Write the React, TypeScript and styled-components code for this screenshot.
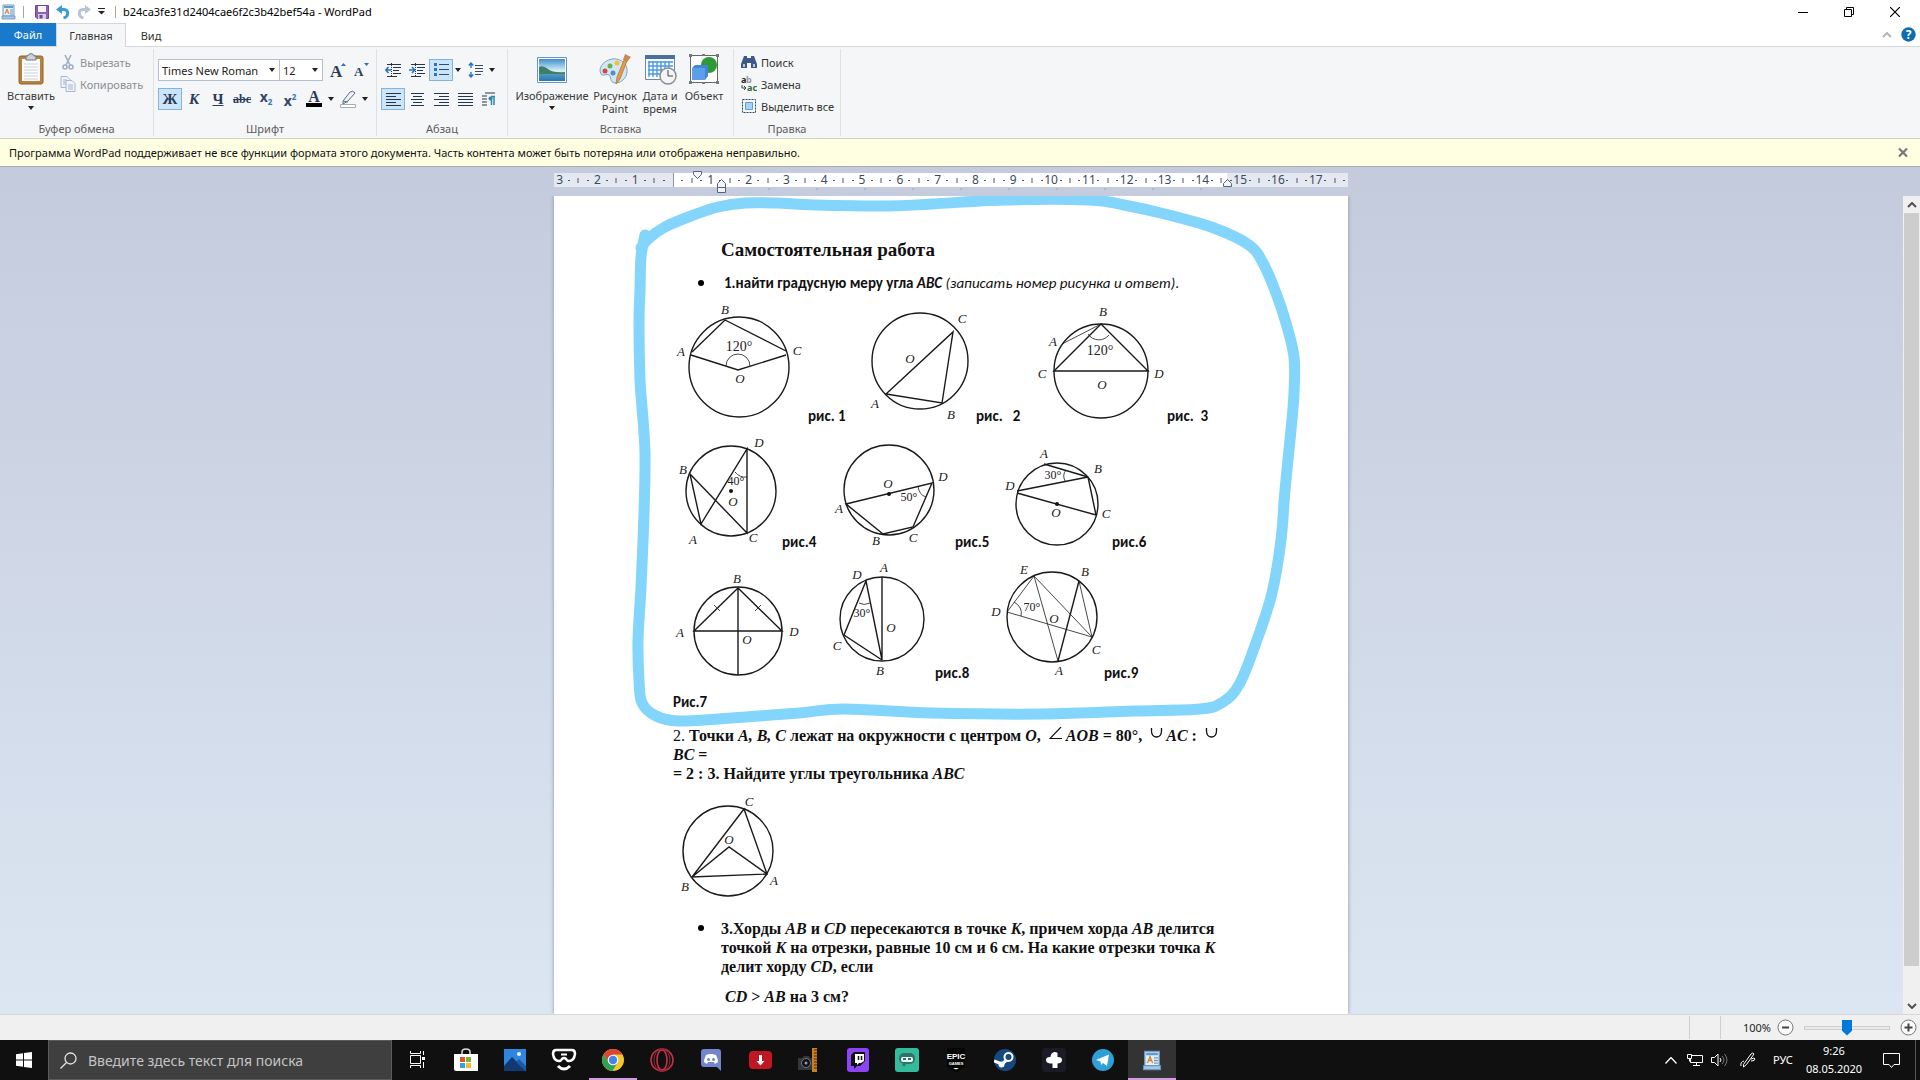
import React from "react";
import styled, { createGlobalStyle, css } from "styled-components";

const ui = `"Noto Sans", "Open Sans", sans-serif`;
const serif = `"Times New Roman", "Liberation Serif", serif`;
const calibri = `Calibri, "Noto Sans", sans-serif`;

const GlobalStyle = createGlobalStyle`
  * { box-sizing: border-box; }
  body { margin: 0; font-family: ${ui}; font-size: 11px; color: #1e1e1e; overflow: hidden; }
  button, select, input { font: inherit; color: inherit; margin: 0; }
  button { border: 0; background: none; padding: 0; }
  svg { display: block; flex: none; }
  p, h1, ul { margin: 0; padding: 0; }
`;

const Window = styled.div`
  display: flex;
  flex-direction: column;
  height: 100vh;
  background: #fff;
`;

/* ---------- title bar and tabs ---------- */
const TitleBar = styled.header`
  display: flex;
  align-items: center;
  height: 23px;
  padding-left: 1px;
`;
const QuickBar = styled.div`
  display: flex;
  align-items: center;
`;
const QuickButton = styled.button`
  display: grid;
  place-items: center;
  width: ${(p: { $w?: number }) => p.$w ?? 21}px;
  height: 18px;
`;
const Rule = styled.span`
  width: 1px;
  height: 12px;
  margin: 0 7px;
  background: #a6a6a6;
`;
const Title = styled.span`
  line-height: 16px;
  color: #000;
  white-space: nowrap;
`;
const WindowButtons = styled.div`
  display: flex;
  margin-left: auto;
  padding-right: 2px;
`;
const WindowButton = styled.button`
  display: grid;
  place-items: center;
  width: 46px;
  height: 20px;
`;
const TabRow = styled.nav`
  display: flex;
  height: 24px;
  border-bottom: 1px solid #d5d6d8;
`;
const FileTab = styled.button`
  width: 56px;
  height: 23px;
  background: #1979ca;
  color: #fff;
`;
const Tab = styled.button<{ $active?: boolean }>`
  width: ${(p) => (p.$active ? 70 : 50)}px;
  height: 24px;
  color: #333;
  ${(p) =>
    p.$active &&
    css`
      background: #f5f6f7;
      border: 1px solid #d5d6d8;
      border-bottom: 0;
    `}
`;
const TabTools = styled.div`
  display: flex;
  align-items: center;
  gap: 9px;
  margin-left: auto;
  padding-right: 4px;
`;

/* ---------- ribbon ---------- */
const Ribbon = styled.section`
  display: flex;
  height: 92px;
  padding: 2px 0;
  background: #f5f6f7;
  border-bottom: 1px solid #d0d2c8;
`;
const Group = styled.div<{ $w: number }>`
  display: flex;
  flex-direction: column;
  width: ${(p) => p.$w}px;
  border-right: 1px solid #dfe1e4;
`;
const GroupBody = styled.div<{ $left: number }>`
  display: flex;
  flex: 1;
  padding: 2px 0 0 ${(p) => p.$left}px;
`;
const GroupRows = styled.div`
  display: flex;
  flex-direction: column;
  gap: 7px;
  padding-top: 8px;
`;
const Row = styled.div`
  display: flex;
`;
const GroupName = styled.div`
  height: 16px;
  line-height: 18px;
  text-align: center;
  color: #5c5c5c;
`;
const BigButton = styled.button<{ $w: number }>`
  display: flex;
  flex-direction: column;
  align-items: center;
  gap: 4px;
  width: ${(p) => p.$w}px;
  padding-top: 2px;
  line-height: 13px;
  color: #3a3a3a;
`;
const SmallStack = styled.div`
  display: flex;
  flex-direction: column;
`;
const SmallButton = styled.button<{ $dim?: boolean }>`
  display: flex;
  align-items: center;
  gap: 4px;
  height: 22px;
  padding-left: 2px;
  color: ${(p) => (p.$dim ? "#8f8f8f" : "#333")};
  white-space: nowrap;
`;
const ToolButton = styled.button<{ $on?: boolean; $narrow?: boolean }>`
  display: grid;
  place-items: center;
  width: ${(p) => (p.$narrow ? 10 : 24)}px;
  height: 22px;
  color: #2b3c59;
  ${(p) =>
    p.$on &&
    css`
      background: #cce4fa;
      border: 1px solid #82b4e0;
    `}
`;
const Glyph = styled.span<{ $look?: "bold" | "italic" | "under" | "strike" }>`
  font-family: ${serif};
  font-size: ${(p) => (p.$look === "strike" ? 12 : 15)}px;
  line-height: 16px;
  font-weight: bold;
  font-style: ${(p) => (p.$look === "italic" ? "italic" : "normal")};
  text-decoration: ${(p) =>
    p.$look === "under" ? "underline" : p.$look === "strike" ? "line-through" : "none"};
`;
const Index = styled.span<{ $up?: boolean }>`
  font-weight: bold;
  font-size: 14px;
  line-height: 16px;
  color: #33476b;
  & > span {
    font-size: 8px;
    vertical-align: ${(p) => (p.$up ? "6px" : "-3px")};
    color: #2f78b8;
  }
`;
const Combo = styled.label<{ $w: number }>`
  display: grid;
  width: ${(p) => p.$w}px;
  height: 22px;
  align-items: center;
  border: 1px solid #b6bfcf;
  background: #fff;
  & + & { margin-left: -1px; }
  & > * { grid-area: 1 / 1; }
  & > svg { justify-self: end; margin-right: 4px; pointer-events: none; }
`;
const ComboSelect = styled.select`
  appearance: none;
  width: 100%;
  height: 20px;
  padding: 0 0 0 3px;
  border: 0;
  background: transparent;
  color: #222;
`;
const Spacer = styled.span<{ $w: number }>`
  width: ${(p) => p.$w}px;
`;

/* ---------- notice ---------- */
const Notice = styled.div`
  display: flex;
  align-items: center;
  justify-content: space-between;
  height: 28px;
  padding: 0 12px 0 9px;
  background: #ffffe1;
  border-bottom: 1px solid #a9aeac;
  color: #111;
`;

/* ---------- workspace ---------- */
const Workspace = styled.main`
  display: flex;
  flex-direction: column;
  flex: 1;
  min-height: 0;
  background: linear-gradient(#c4cbdd, #dce6f2);
`;
const RulerRow = styled.div`
  display: flex;
  justify-content: center;
  height: 29px;
  padding-right: 18px;
`;
const Body = styled.div`
  display: flex;
  flex: 1;
  min-height: 0;
`;
const Canvas = styled.div`
  display: flex;
  justify-content: center;
  flex: 1;
  padding-right: 1px;
  overflow: hidden;
`;
const Page = styled.article`
  position: relative;
  width: 794px;
  padding: 40px 110px 0 119px;
  background: #fff;
  box-shadow: 0 0 4px #8a93a8;
  font-family: ${serif};
  font-weight: bold;
  font-size: 16px;
  line-height: 19px;
  color: #111;
`;
const Scribble = styled.svg`
  position: absolute;
  left: 0;
  top: 0;
  pointer-events: none;
`;
const Heading = styled.h1`
  margin-left: 48px;
  font-size: 19px;
  line-height: 28px;
`;
const TaskList = styled.ul`
  padding-left: 48px;
  list-style: none;
`;
const Task = styled.li<{ $sans?: boolean }>`
  display: flex;
  margin-left: -24px;
  gap: ${(p) => (p.$sans ? 20 : 17)}px;
  ${(p) =>
    p.$sans &&
    css`
      margin: 10px 0 7px -24px;
      font-family: ${calibri};
      font-size: 15px;
      white-space: nowrap;
    `}
  &::before {
    content: "";
    flex: none;
    width: 6px;
    height: 6px;
    margin: 6px 0 0 1px;
    border-radius: 50%;
    background: #000;
  }
`;
const Light = styled.span`
  font-weight: normal;
`;
const FigureRow = styled.div`
  display: flex;
`;
const Figure = styled.figure<{ $w: number }>`
  display: flex;
  align-items: flex-end;
  width: ${(p) => p.$w}px;
  margin: 0;
`;
const Caption = styled.figcaption`
  font-family: ${calibri};
  font-size: 15px;
  line-height: 19px;
  white-space: pre;
`;
const LooseCaption = styled.p`
  margin: 10px 0 14px;
  font-family: ${calibri};
  font-size: 15px;
`;
const Drawing = styled.svg`
  overflow: visible;
  fill: none;
  stroke: #1a1a1a;
  stroke-width: 1.4;
  & text {
    fill: #222;
    stroke: none;
    font-family: ${serif};
    font-size: 13px;
    font-weight: normal;
    font-style: italic;
    text-anchor: middle;
  }
  & .angle { font-style: normal; font-size: 14px; }
  & .small { font-style: normal; font-size: 12px; }
  & .thin { stroke-width: 0.8; }
  & .dot { fill: #111; stroke: none; }
`;
const Symbol = styled.svg`
  display: inline-block;
  vertical-align: 1px;
  margin: 0 3px 0 4px;
`;
const Problem = styled.p`
  margin-bottom: 5px;
`;
const LastProblem = styled.section`
  margin-top: 5px;
`;
const LastLine = styled.p`
  margin: 11px 0 0 52px;
`;
const Scrollbar = styled.div`
  display: flex;
  flex-direction: column;
  width: 17px;
  padding: 0 1px;
  background: #f0f0f0;
`;
const ScrollButton = styled.button`
  display: grid;
  place-items: center;
  height: 17px;
`;
const ScrollTrack = styled.div`
  flex: 1;
  padding-bottom: 31px;
`;
const ScrollThumb = styled.div`
  height: 100%;
  background: #cdcdcd;
`;

/* ---------- status bar ---------- */
const StatusBar = styled.footer`
  display: flex;
  align-items: center;
  justify-content: flex-end;
  height: 26px;
  padding-right: 3px;
  background: #f0f0f0;
  border-top: 1px solid #d7d7d7;
`;
const StatusCell = styled.span<{ $w: number }>`
  width: ${(p) => p.$w}px;
  height: 23px;
  line-height: 23px;
  border-left: 1px solid #d0d0d0;
  text-align: right;
`;
const ZoomButton = styled.button`
  display: grid;
  place-items: center;
  margin: 0 6px;
  &:last-child { margin-right: 0; }
`;
const ZoomSlider = styled.input`
  appearance: none;
  width: 94px;
  height: 18px;
  background: transparent;
  padding: 0 4px;
  &::-webkit-slider-runnable-track {
    height: 4px;
    background: #e7eaea;
    border: 1px solid #cfcfcf;
  }
  &::-webkit-slider-thumb {
    appearance: none;
    width: 10px;
    height: 16px;
    margin-top: -7px;
    background: #0078d7;
    clip-path: polygon(0 0, 100% 0, 100% 70%, 50% 100%, 0 70%);
  }
`;

/* ---------- taskbar ---------- */
const Taskbar = styled.nav`
  display: flex;
  height: 40px;
  background: #101010;
  color: #fff;
`;
const StartButton = styled.button`
  display: grid;
  place-items: center;
  width: 48px;
`;
const SearchBox = styled.label`
  display: flex;
  align-items: center;
  gap: 11px;
  width: 344px;
  padding-left: 11px;
  background: #3f3f3f;
  border: 1px solid #5b5b5b;
`;
const SearchInput = styled.input`
  flex: 1;
  min-width: 0;
  border: 0;
  padding: 0;
  background: transparent;
  font-size: 14px;
  &::placeholder { color: #c4c4c4; opacity: 1; }
`;
const Apps = styled.div`
  display: flex;
  gap: 1px;
  padding-left: 1px;
`;
const AppButton = styled.button<{ $state?: "running" | "active" }>`
  display: grid;
  place-items: center;
  width: 48px;
  height: 40px;
  padding-top: 2px;
  border-bottom: 2px solid ${(p) => (p.$state ? "#d39ae0" : "transparent")};
  background: ${(p) => (p.$state === "active" ? "#333" : "none")};
`;
const Tray = styled.div`
  display: flex;
  align-items: center;
  margin-left: auto;
  padding-right: 4px;
`;
const TrayButton = styled.button<{ $w: number }>`
  display: grid;
  place-items: center;
  width: ${(p) => p.$w}px;
  height: 40px;
  line-height: 18px;
`;
const ShowDesktop = styled.span`
  width: 1px;
  height: 40px;
  background: #555;
`;

/* ---------- small icons ---------- */
const Arrow = () => (
  <svg width="6" height="4"><path d="M0 0h6L3 4z" fill="#222" /></svg>
);

const WordPadIcon = ({ s = 15 }: { s?: number }) => (
  <svg width={s} height={s + 1} viewBox="0 0 15 16">
    <path d="M2 1h11v11H2z" fill="#e3f0fb" stroke="#6f9cc6" />
    <path d="M1 12h13v3H1z" fill="#a5c8e6" stroke="#6a93ba" strokeWidth=".8" />
    <path d="M3 2h9v2H3z" fill="#5f9ad0" />
    <path d="M4 10l2-5 2 5M5 8h2" stroke="#d6842c" fill="none" />
    <path d="M9 6h3M9 8h3M9 10h3" stroke="#6f9cc6" />
  </svg>
);
const SaveIcon = () => (
  <svg width="14" height="14" viewBox="0 0 14 14">
    <path d="M.5.5h13v13H2L.5 12z" fill="#8b62b0" stroke="#6f4796" />
    <path d="M3 1h8v6H3z" fill="#f5f2f8" /><path d="M3 9h8v5H3z" fill="#d8cde4" />
    <path d="M4.500 10h3v3.500h-3z" fill="#6f4796" />
  </svg>
);
const UndoIcon = () => (
  <svg width="14" height="14" viewBox="0 0 14 14">
    <path d="M6 0L0 4.500 6 9z" fill="#3a9bd4" />
    <path d="M4 4.500h4c5 0 5 7-.5 8.500" fill="none" stroke="#3a9bd4" strokeWidth="3" />
  </svg>
);
const RedoIcon = () => (
  <svg width="14" height="14" viewBox="0 0 14 14">
    <path d="M8 0l6 4.500L8 9z" fill="#bac3d2" />
    <path d="M10 4.500H6c-5 0-5 7 .5 8.500" fill="none" stroke="#bac3d2" strokeWidth="3" />
  </svg>
);
const ClipboardIcon = () => (
  <svg width="26" height="32" viewBox="0 0 26 32">
    <rect x="1" y="3" width="24" height="28" rx="2" fill="#b9813f" stroke="#93622a" />
    <path d="M4 6h18v22H4z" fill="#fcfcfc" />
    <path d="M6 11h14M6 14h14M6 17h14M6 20h14M6 23h14M6 26h14" stroke="#cbd3dc" />
    <path d="M8 3h2c0-3 6-3 6 0h2v4H8z" fill="#cdd3da" stroke="#6e7883" />
  </svg>
);
const ScissorsIcon = () => (
  <svg width="16" height="16" viewBox="0 0 16 16" fill="none" stroke="#a0adc4" strokeWidth="1.600">
    <path d="M5 1l5 10M11 1L6 11" /><circle cx="5" cy="13" r="2" /><circle cx="11" cy="13" r="2" />
  </svg>
);
const CopyIcon = () => (
  <svg width="16" height="16" viewBox="0 0 16 16" fill="#f1f4f9" stroke="#a9b6cc">
    <path d="M1 .5h6l3 3v8H1z" /><path d="M6 4.500h6l3 3v8H6z" /><path d="M3 4h4M3 6h3M3 8h3M8 9h5M8 11h5M8 13h5" />
  </svg>
);
const SizeIcon = ({ up }: { up?: boolean }) => (
  <svg width="16" height="16" viewBox="0 0 16 16">
    <text x="0" y={up ? 15 : 14} fontFamily="Liberation Serif" fontWeight="bold" fontSize={up ? 17 : 13} fill="#2b3c59">A</text>
    <path d={up ? "M11 4h5l-2.500-3z" : "M10 1h5l-2.500 3z"} fill="#2f6fb5" />
  </svg>
);
const FontColorIcon = () => (
  <svg width="16" height="18" viewBox="0 0 16 18">
    <text x="8" y="12" textAnchor="middle" fontFamily="Liberation Serif" fontWeight="bold" fontSize="16" fill="#2b3c59">A</text>
    <path d="M0 13h16v4H0z" fill="#000" />
  </svg>
);
const HighlightIcon = () => (
  <svg width="16" height="18" viewBox="0 0 16 18">
    <path d="M3 11l7-9q3-2 5 1l-7 8-5 3z" fill="#eef1f5" stroke="#5d6f8a" /><path d="M3 11l5 1" stroke="#5d6f8a" />
    <path d="M.5 14.500h15v3H.5z" fill="#fff" stroke="#a7adb7" />
  </svg>
);
const IndentIcon = ({ out }: { out?: boolean }) => (
  <svg width="16" height="14" viewBox="0 0 16 14" fill="none">
    <path d="M2 1.500h14M8 4.500h8M8 7.500h6M8 10.500h8M2 13.500h10" stroke="#26344c" />
    <path d="M6.500 0v14" stroke="#26344c" strokeDasharray="1 1" />
    <path d={out ? "M6 7H1M3.500 4L.8 7l2.700 3" : "M0 7h5M3 4l2.700 3L3 10"} stroke="#2775c4" strokeWidth="1.600" />
  </svg>
);
const BulletsIcon = () => (
  <svg width="15" height="14" viewBox="0 0 15 14">
    <path d="M5 1.500h10M5 6.500h10M5 11.500h10" stroke="#3a4a66" />
    <path d="M0 0h3v3H0zM0 5h3v3H0zM0 10h3v3H0z" fill="#2775c4" />
  </svg>
);
const SpacingIcon = () => (
  <svg width="15" height="16" viewBox="0 0 15 16" fill="none">
    <path d="M7 3.500h8M7 6.500h8M7 9.500h8M7 12.500h6" stroke="#3a4a66" />
    <path d="M3 1v5M3 10v5M.8 3.500L3 1l2.200 2.500M.8 12.500L3 15l2.200-2.500" stroke="#2775c4" strokeWidth="1.400" />
  </svg>
);
const AlignIcon = ({ d }: { d: string }) => (
  <svg width="15" height="13" viewBox="0 0 15 13"><path d={d} stroke="#26344c" /></svg>
);
const PilcrowIcon = () => (
  <svg width="14" height="14" viewBox="0 0 14 14" fill="none">
    <path d="M3 1h10M0 4h5M0 7h5M0 10h5M0 13h5" stroke="#26344c" />
    <path d="M13 4.500H9M9.500 4.500V13M12 4.500V13" stroke="#2e86b5" strokeWidth="1.500" /><circle cx="8.500" cy="6.500" r="2" fill="#2e86b5" />
  </svg>
);
const PictureIcon = () => (
  <svg width="32" height="32" viewBox="0 0 32 32">
    <defs><linearGradient id="sky" x2="0" y2="1"><stop stopColor="#3f8fd0" /><stop offset=".55" stopColor="#d9f2f4" /><stop offset="1" stopColor="#2c86c0" /></linearGradient></defs>
    <path d="M1.500 4.500h29v25h-29z" fill="#fff" stroke="#6e94b5" /><path d="M3 6h26v22H3z" fill="url(#sky)" />
    <path d="M3 14q4-2 9 2t17 3v2H3z" fill="#3c7f6a" /><path d="M3 21h26v7H3z" fill="#1f6fa8" opacity=".6" />
  </svg>
);
const PaintIcon = () => (
  <svg width="34" height="32" viewBox="0 0 34 32">
    <path d="M14 6C4 8 0 16 3 21c3 3 5-1 8 1s0 7 6 8c8 0 13-7 12-14S21 5 14 6z" fill="#d3e6f3" stroke="#7ea3bf" />
    <circle cx="7" cy="18" r="2.500" fill="#d0493e" /><circle cx="12" cy="13" r="2.500" fill="#6bb04a" />
    <circle cx="19" cy="10" r="2.500" fill="#f0c23c" /><circle cx="15" cy="20" r="2.500" fill="#4d8fd0" />
    <path d="M18 31l1-7 7-17 3 1-7 18z" fill="#e39a4c" stroke="#b06f2c" strokeWidth=".7" />
    <path d="M25 7l2-6 6 3-4 5z" fill="#c98a58" />
  </svg>
);
const DateIcon = () => (
  <svg width="34" height="32" viewBox="0 0 34 32">
    <path d="M2.500 2.500h29v24h-29z" fill="#f7fafd" stroke="#7089a8" /><path d="M2 2h30v4H2z" fill="#4a6fa0" />
    <path d="M5 9h25M5 13h25M5 17h25M5 21h25M6 8v16M10 8v16M14 8v16M18 8v16M22 8v16M26 8v16" stroke="#4f9bdc" strokeWidth="1.400" />
    <circle cx="25" cy="23" r="8" fill="#f4f4f4" stroke="#8a8f95" strokeWidth="1.500" /><path d="M25 17v6h5" stroke="#444" fill="none" />
  </svg>
);
const ObjectIcon = () => (
  <svg width="32" height="32" viewBox="0 0 32 32">
    <path d="M2.500 2.500h27v27h-27z" fill="#fff" stroke="#666" />
    <path d="M1 1h3v3H1zM28 1h3v3h-3zM1 28h3v3H1zM28 28h3v3h-3zM14 1h3v2h-3zM14 29h3v2h-3z" fill="#777" />
    <circle cx="21" cy="12" r="8" fill="#2f9a35" /><path d="M4 15l3-3h13v11l-3 4H4z" fill="#3f86d8" /><path d="M4 15h13v12H4z" fill="#5c9fe8" />
  </svg>
);
const FindIcon = () => (
  <svg width="16" height="14" viewBox="0 0 16 14">
    <path d="M3 1h3v2h4V1h3l3 8v4h-6V8H6v5H0V9z" fill="#3c5a85" /><path d="M2 9h2v3H2zM12 9h2v3h-2z" fill="#b7c9e0" />
  </svg>
);
const ReplaceIcon = () => (
  <svg width="16" height="16" viewBox="0 0 16 16" fontFamily="Noto Sans" fontWeight="bold" fontSize="9">
    <text x="0" y="7" fill="#222">a</text><text x="5" y="7" fill="#999">b</text>
    <text x="6" y="15" fill="#2a6a3a">ac</text><path d="M1 9v3h4M3 10l2 2-2 2" fill="none" stroke="#345" />
  </svg>
);
const SelectAllIcon = () => (
  <svg width="16" height="16" viewBox="0 0 16 16">
    <path d="M1.500 1.500h13v13h-13z" fill="none" stroke="#22476e" strokeDasharray="2 1" /><path d="M4.500 4.500h7v7h-7z" fill="#a9d3f5" stroke="#5f9fd0" />
  </svg>
);

/* ---------- ruler ---------- */
const ZERO = 119;
const cm = (n: number) => ZERO + (n * 794) / 21;
const Ruler = () => {
  const marks = [];
  for (let q = -12; q <= 71; q++) {
    const x = cm(q / 4);
    if (q % 4 === 0) {
      if (q !== 0) marks.push(<text key={q} x={x} y="17" textAnchor="middle">{Math.abs(q / 4)}</text>);
    } else if (q % 2 === 0) {
      marks.push(<path key={q} d={`M${Math.round(x)} 11v5`} stroke="#4a5568" />);
    } else {
      marks.push(<rect key={q} x={Math.round(x) - 1} y="13" width="2" height="1" fill="#4a5568" />);
    }
  }
  const stops = Array.from({ length: 10 }, (_, i) => 215 + i * 48);
  return (
    <svg width="794" height="29" fontSize="12" fill="#3d4a60">
      <rect y="6" width="794" height="14" fill="#e4e8f1" />
      <rect x={ZERO} y="6" width="554" height="14" fill="#fff" />
      <path d={`M${ZERO + 0.5} 6v14`} stroke="#8c97ad" />
      {marks}
      {stops.map((x) => <path key={x} d={`M${x} 21v2`} stroke="#9aa4b8" />)}
      <g fill="#f3f5f9" stroke="#56657e">
        <path d="M139.500 4.500h8v3l-4 4-4-4z" />
        <path d="M163.500 20.500v-4l4-4 4 4v4zM163.500 20.500h8v5h-8z" />
        <path d="M669.500 19.500v-3l4-4 4 4v3z" />
      </g>
    </svg>
  );
};

/* ---------- geometry figures ---------- */
type Label = [string, number, number, string?];
type Fig = {
  box: [number, number, number, number];
  c: [number, number, number];
  d: string;
  thin?: string;
  dot?: [number, number];
  labels: Label[];
  caption?: string;
  w: number;
};

const rows: Fig[][] = [
  [
    {
      box: [673, 300, 135, 126], w: 172, caption: "рис. 1", c: [739, 367, 50],
      d: "M691 355L738 370 786 355M692 352L725 320 786 351", thin: "M726 366A12 12 0 0 1 750 366",
      labels: [["B", 725, 310], ["A", 681, 352], ["C", 797, 351], ["120°", 739, 347, "angle"], ["O", 740, 379]],
    },
    {
      box: [845, 300, 131, 126], w: 177, caption: "рис.   2", c: [920, 361, 48],
      d: "M886 394L953 332 942 403z",
      labels: [["C", 962, 319], ["O", 910, 359], ["A", 875, 404], ["B", 951, 415]],
    },
    {
      box: [1022, 300, 145, 126], w: 190, caption: "рис.  3", c: [1101, 371, 47],
      d: "M1054 371L1101 324 1148 371z", thin: "M1062 344L1101 324M1088 334A13 13 0 0 0 1109 335",
      labels: [["B", 1103, 312], ["A", 1053, 342], ["120°", 1100, 351, "angle"], ["C", 1042, 374], ["D", 1159, 374], ["O", 1102, 385]],
    },
  ],
  [
    {
      box: [673, 426, 109, 126], w: 153, caption: "рис.4", c: [731, 491, 45],
      d: "M701 524L690 474 747 533V449z", thin: "M735 472Q740 478 747 477", dot: [731, 491],
      labels: [["D", 759, 443], ["B", 683, 470], ["40°", 736, 481, "small"], ["O", 733, 502], ["A", 693, 540], ["C", 753, 538]],
    },
    {
      box: [826, 426, 129, 126], w: 171, caption: "рис.5", c: [889, 490, 45],
      d: "M846 504L932 483 913 527 883 534z", thin: "M918 486Q919 495 926 497", dot: [889, 494],
      labels: [["O", 888, 484], ["D", 943, 477], ["50°", 909, 497, "small"], ["A", 839, 509], ["B", 876, 541], ["C", 913, 538]],
    },
    {
      box: [997, 426, 115, 126], w: 150, caption: "рис.6", c: [1057, 504, 41],
      d: "M1044 464L1088 477 1017 491M1088 477L1096 515 1017 493", thin: "M1066 470Q1062 475 1065 481", dot: [1057, 504],
      labels: [["A", 1044, 454], ["B", 1098, 469], ["30°", 1053, 475, "small"], ["D", 1010, 486], ["O", 1056, 513], ["C", 1106, 514]],
    },
  ],
  [
    {
      box: [673, 552, 140, 131], w: 140, c: [738, 631, 44],
      d: "M694 631L738 588 782 631zM738 588V675", thin: "M714 605L720 611M761 605L755 611",
      labels: [["B", 737, 579], ["A", 680, 633], ["D", 794, 632], ["O", 747, 640]],
    },
    {
      box: [813, 552, 122, 131], w: 172, caption: "рис.8", c: [882, 619, 42],
      d: "M882 577V660L866 581 844 635 882 660", thin: "M859 603Q864 606 870 603",
      labels: [["D", 857, 575], ["A", 884, 568], ["30°", 862, 613, "small"], ["O", 891, 628], ["C", 837, 646], ["B", 880, 671]],
    },
    {
      box: [985, 552, 119, 131], w: 160, caption: "рис.9", c: [1052, 617, 45],
      d: "M1079 581L1058 661", thin: "M1007 612L1034 576 1058 661M1034 576L1092 637 1079 581M1092 637L1007 612M1014 602Q1023 607 1021 616",
      labels: [["E", 1024, 570], ["B", 1085, 572], ["D", 996, 612], ["70°", 1032, 607, "small"], ["O", 1054, 619], ["C", 1096, 650], ["A", 1059, 671]],
    },
  ],
];
const triangle: Fig = {
  box: [673, 788, 120, 126], w: 120, c: [728, 851, 45],
  d: "M744 809L692 877 767 874zM692 877L729 847 767 874",
  labels: [["C", 749, 802], ["O", 729, 840], ["B", 685, 887], ["A", 774, 881]],
};

const FigureView = ({ f }: { f: Fig }) => (
  <Figure $w={f.w}>
    <Drawing width={f.box[2]} height={f.box[3]} viewBox={f.box.join(" ")}>
      <circle cx={f.c[0]} cy={f.c[1]} r={f.c[2]} />
      <path d={f.d} />
      {f.thin && <path className="thin" d={f.thin} />}
      {f.dot && <circle className="dot" cx={f.dot[0]} cy={f.dot[1]} r="2" />}
      {f.labels.map(([t, x, y, k], i) => <text key={i} className={k} x={x} y={y + 4}>{t}</text>)}
    </Drawing>
    {f.caption && <Caption>{f.caption}</Caption>}
  </Figure>
);
const Arc = () => (
  <Symbol width="13" height="12" viewBox="0 0 13 12"><path d="M1.500 0v3c0 8 10 8 10 0V0" fill="none" stroke="#111" strokeWidth="1.300" /></Symbol>
);

/* ---------- taskbar icons ---------- */
const TaskViewIcon = () => (
  <svg width="17" height="18" viewBox="0 0 17 18" fill="none" stroke="#fff">
    <path d="M1.500 4.500h10v8h-10zM1.500 0v2.500h10V0M1.500 17v-2.500h10V17M14.500 0v4M14.500 11v6" /><path d="M13 6h3v3h-3z" fill="#fff" stroke="none" />
  </svg>
);
const apps: { name: string; state?: "running" | "active"; icon: React.ReactNode }[] = [
  { name: "Представление задач", icon: <TaskViewIcon /> },
  { name: "Microsoft Store", icon: (
    <svg width="24" height="24" viewBox="0 0 24 24"><path d="M8 7V4c0-4 8-4 8 0v3" fill="none" stroke="#ddd" strokeWidth="1.500" /><path d="M0 6h24v17H2q-2 0-2-2z" fill="#fff" /><path d="M6 9h5v5H6z" fill="#e25428" /><path d="M12 9h5v5h-5z" fill="#7fb42e" /><path d="M6 15h5v5H6z" fill="#2fa4e0" /><path d="M12 15h5v5h-5z" fill="#f5b82e" /></svg>) },
  { name: "Фотографии", icon: (
    <svg width="24" height="23" viewBox="0 0 24 23"><path d="M1 0h22v22H1z" fill="#2f86dd" /><path d="M1 17L9 8l14 14H1z" fill="#123a70" /><path d="M13 13l3-3 7 7v5z" fill="#1d5aa6" /><circle cx="16" cy="5" r="2" fill="#e8f3ff" /></svg>) },
  { name: "Маска", icon: (
    <svg width="26" height="24" viewBox="0 0 26 24" fill="none" stroke="#fff" strokeWidth="2.500"><path d="M5 2h16q3 0 3 4-1 7-6 7-2 0-3-2-2-2-4 0-1 2-3 2-5 0-6-7 0-4 3-4z" /><path d="M7 18q6 6 12 0" strokeWidth="3" /><path d="M10 6.500h6" strokeWidth="2" /></svg>) },
  { name: "Google Chrome", state: "running", icon: (
    <svg width="22" height="22" viewBox="0 0 22 22"><circle cx="11" cy="11" r="11" fill="#f4c72e" /><path d="M1.500 5.500A11 11 0 0 1 20.500 5.500H11L6.500 13.500z" fill="#dc4436" /><path d="M1.500 5.500A11 11 0 0 0 10.500 22l5-8.500H6.500z" fill="#31a052" /><circle cx="11" cy="11" r="5.300" fill="#fff" /><circle cx="11" cy="11" r="4.200" fill="#4583ee" /></svg>) },
  { name: "Opera GX", icon: (
    <svg width="24" height="24" viewBox="0 0 24 24" fill="none" stroke="#c3304a"><circle cx="12" cy="12" r="11" strokeWidth="1.600" /><ellipse cx="12" cy="12" rx="5" ry="10" strokeWidth="1.600" /><ellipse cx="12" cy="12" rx="8" ry="11" stroke="#8d2438" /></svg>) },
  { name: "Discord", icon: (
    <svg width="20" height="22" viewBox="0 0 20 22"><path d="M3 0h14q3 0 3 3v19l-4-4H3q-3 0-3-3V3q0-3 3-3z" fill="#7386cc" /><path d="M5 6q5-2 10 0 2 4 2 7l-3 2-1-2H7l-1 2-3-2q0-3 2-7z" fill="#fff" /><circle cx="7.500" cy="10.500" r="1.500" fill="#7386cc" /><circle cx="12.500" cy="10.500" r="1.500" fill="#7386cc" /></svg>) },
  { name: "Загрузчик", icon: (
    <svg width="23" height="18" viewBox="0 0 23 18"><rect width="23" height="18" rx="4" fill="#c01722" /><path d="M10 4h3v6h2.500l-4 4.500-4-4.500H10z" fill="#fff" /></svg>) },
  { name: "Камера", icon: (
    <svg width="22" height="24" viewBox="0 0 22 24"><path d="M14 0h5v24h-5z" fill="#c9801f" /><path d="M16 2h3M16 5h3M16 8h3M16 11h3M16 14h3M16 17h3M16 20h3" stroke="#422" /><path d="M0 10h4l2-2h5l1 2h2v12H0z" fill="#33363b" /><circle cx="8" cy="15" r="4.500" fill="#111" stroke="#777" /><circle cx="8" cy="15" r="1.500" fill="#8a9ac0" /></svg>) },
  { name: "Twitch", icon: (
    <svg width="22" height="24" viewBox="0 0 22 24"><rect width="22" height="24" rx="3" fill="#8c45f5" /><path d="M4 7l3-3h11v9l-5 5h-3l-3 3v-3H4z" fill="#111" /><path d="M8 6h9v7l-3 2h-2l-2 2v-2H8z" fill="#fff" /><path d="M11.500 8v4M14.500 8v4" stroke="#111" strokeWidth="1.500" /></svg>) },
  { name: "Streamlabs", icon: (
    <svg width="24" height="24" viewBox="0 0 24 24"><rect width="24" height="24" rx="3" fill="#32bc9b" /><rect x="4" y="5" width="16" height="11" rx="5" fill="#35716b" /><rect x="6" y="9" width="12" height="5" rx="2" fill="#e5fff8" /><path d="M8 11h3M13 11h3" stroke="#35716b" strokeWidth="2" /><path d="M7 16h4l-2 3z" fill="#35716b" /></svg>) },
  { name: "Epic Games", icon: (
    <svg width="20" height="24" viewBox="0 0 20 24" fill="#fff" textAnchor="middle" fontFamily="Liberation Sans" fontWeight="bold"><path d="M1 0h18v19l-9 5-9-5z" fill="#050505" /><text x="10" y="11" fontSize="8">EPIC</text><text x="10" y="17" fontSize="4">GAMES</text><path d="M7 20h6l-3 1.500z" /></svg>) },
  { name: "Steam", icon: (
    <svg width="22" height="22" viewBox="0 0 22 22"><circle cx="11" cy="11" r="11" fill="#16497f" /><path d="M0 12l8 3 6-5" stroke="#fff" strokeWidth="3" fill="none" /><circle cx="14.500" cy="8" r="4" fill="#16497f" stroke="#fff" strokeWidth="2" /><circle cx="7.500" cy="15.500" r="3" fill="#fff" /></svg>) },
  { name: "Плюс", icon: (
    <svg width="24" height="24" viewBox="0 0 24 24"><rect width="24" height="24" rx="3" fill="#1b1b28" /><path d="M8.500 8Q9 5 12 4q3 0 3.500 1V9H16q4 0 4 3t-4 3.500h-.5V20h-5v-4.500H8Q4 15 4 12t4-3h.5z" fill="#fff" /></svg>) },
  { name: "Telegram", icon: (
    <svg width="22" height="22" viewBox="0 0 22 22"><circle cx="11" cy="11" r="11" fill="#2f9fd8" /><path d="M4 11l13-5.500L15 17l-4-3-2 2-.5-3.500z" fill="#fff" /></svg>) },
  { name: "WordPad", state: "active", icon: <WordPadIcon s={20} /> },
];

const Chevron = ({ d, c, w = 2 }: { d: string; c: string; w?: number }) => (
  <svg width="10" height="6" viewBox="0 0 10 6"><path d={d} fill="none" stroke={c} strokeWidth={w} /></svg>
);

/* ---------- marker outline ---------- */
const strokePoints: [number, number][] = [
  [87, 52], [94, 43], [111, 31], [137, 20], [164, 11], [191, 7], [222, 7], [262, 9], [334, 10], [378, 8],
  [450, 4], [535, 4], [570, 9], [615, 19], [660, 32], [695, 49], [709, 67], [722, 97], [732, 127], [740, 161],
  [740, 197], [737, 234], [731, 294], [727, 344], [718, 397], [704, 441], [686, 487], [669, 506], [646, 513],
  [579, 515], [490, 518], [378, 517], [289, 513], [245, 517], [164, 523], [124, 525], [102, 520], [88, 507],
  [85, 484], [84, 444], [87, 391], [90, 317], [91, 257], [88, 211], [86, 184], [85, 127], [86, 94], [87, 61], [91, 39],
];
const smooth = (p: [number, number][]) =>
  p.slice(1).reduce((d, b, i) => {
    const a = p[i];
    const before = p[i - 1] ?? a;
    const after = p[i + 2] ?? b;
    return `${d}C${a[0] + (b[0] - before[0]) / 6} ${a[1] + (b[1] - before[1]) / 6} ${b[0] - (after[0] - a[0]) / 6} ${b[1] - (after[1] - a[1]) / 6} ${b[0]} ${b[1]}`;
  }, `M${p[0][0]} ${p[0][1]}`);

export default function App() {
  return (
    <Window>
      <GlobalStyle />
      <TitleBar>
        <QuickBar>
          <QuickButton $w={15} aria-label="WordPad"><WordPadIcon /></QuickButton>
          <Rule />
          <QuickButton aria-label="Сохранить"><SaveIcon /></QuickButton>
          <QuickButton aria-label="Отменить"><UndoIcon /></QuickButton>
          <QuickButton aria-label="Вернуть"><RedoIcon /></QuickButton>
          <QuickButton $w={14} aria-label="Настройка панели">
            <svg width="7" height="7"><path d="M0 .5h7" stroke="#222" /><path d="M0 3h7L3.500 6.500z" fill="#222" /></svg>
          </QuickButton>
          <Rule />
        </QuickBar>
        <Title>b24ca3fe31d2404cae6f2c3b42bef54a - WordPad</Title>
        <WindowButtons>
          <WindowButton aria-label="Свернуть"><svg width="10" height="10"><path d="M0 5.500h10" stroke="#000" /></svg></WindowButton>
          <WindowButton aria-label="Восстановить"><svg width="10" height="10" fill="none" stroke="#000"><path d="M.5 2.500h7v7h-7zM2.500 2.500v-2h7v7h-2" /></svg></WindowButton>
          <WindowButton aria-label="Закрыть"><svg width="10" height="10"><path d="M0 0l10 10M10 0L0 10" stroke="#000" strokeWidth="1.200" /></svg></WindowButton>
        </WindowButtons>
      </TitleBar>
      <TabRow>
        <FileTab>Файл</FileTab>
        <Tab $active>Главная</Tab>
        <Tab>Вид</Tab>
        <TabTools>
          <Chevron d="M1 5l4-4 4 4" c="#b5b5b5" />
          <svg width="15" height="15" viewBox="0 0 15 15"><circle cx="7.500" cy="7.500" r="7.200" fill="#0f6cb4" /><text x="7.500" y="12" textAnchor="middle" fill="#fff" fontSize="12" fontWeight="bold">?</text></svg>
        </TabTools>
      </TabRow>

      <Ribbon>
        <Group $w={154}>
          <GroupBody $left={4}>
            <BigButton $w={54}><ClipboardIcon />Вставить<Arrow /></BigButton>
            <SmallStack>
              <SmallButton $dim><ScissorsIcon />Вырезать</SmallButton>
              <SmallButton $dim><CopyIcon />Копировать</SmallButton>
            </SmallStack>
          </GroupBody>
          <GroupName>Буфер обмена</GroupName>
        </Group>
        <Group $w={223}>
          <GroupBody $left={4}>
            <GroupRows>
              <Row>
                <Combo $w={122}>
                  <ComboSelect aria-label="Семейство шрифтов"><option>Times New Roman</option></ComboSelect><Arrow />
                </Combo>
                <Combo $w={44}>
                  <ComboSelect aria-label="Размер шрифта"><option>12</option></ComboSelect><Arrow />
                </Combo>
                <Spacer $w={3} />
                <ToolButton aria-label="Увеличить шрифт"><SizeIcon up /></ToolButton>
                <ToolButton aria-label="Уменьшить шрифт"><SizeIcon /></ToolButton>
              </Row>
              <Row>
                <ToolButton $on><Glyph $look="bold">Ж</Glyph></ToolButton>
                <ToolButton><Glyph $look="italic">К</Glyph></ToolButton>
                <ToolButton><Glyph $look="under">Ч</Glyph></ToolButton>
                <ToolButton><Glyph $look="strike">abc</Glyph></ToolButton>
                <ToolButton><Index>x<span>2</span></Index></ToolButton>
                <ToolButton><Index $up>x<span>2</span></Index></ToolButton>
                <ToolButton aria-label="Цвет текста"><FontColorIcon /></ToolButton>
                <ToolButton $narrow aria-label="Цвета"><Arrow /></ToolButton>
                <ToolButton aria-label="Выделение цветом"><HighlightIcon /></ToolButton>
                <ToolButton $narrow aria-label="Цвета выделения"><Arrow /></ToolButton>
              </Row>
            </GroupRows>
          </GroupBody>
          <GroupName>Шрифт</GroupName>
        </Group>
        <Group $w={131}>
          <GroupBody $left={4}>
            <GroupRows>
              <Row>
                <ToolButton aria-label="Уменьшить отступ"><IndentIcon out /></ToolButton>
                <ToolButton aria-label="Увеличить отступ"><IndentIcon /></ToolButton>
                <ToolButton $on aria-label="Список"><BulletsIcon /></ToolButton>
                <ToolButton $narrow aria-label="Виды списка"><Arrow /></ToolButton>
                <ToolButton aria-label="Интервал"><SpacingIcon /></ToolButton>
                <ToolButton $narrow aria-label="Интервалы"><Arrow /></ToolButton>
              </Row>
              <Row>
                <ToolButton $on aria-label="По левому краю"><AlignIcon d="M0 .5h15M0 3.500h10M0 6.500h15M0 9.500h10M0 12.500h15" /></ToolButton>
                <ToolButton aria-label="По центру"><AlignIcon d="M1 .5h13M3 3.500h9M1 6.500h13M3 9.500h9M1 12.500h13" /></ToolButton>
                <ToolButton aria-label="По правому краю"><AlignIcon d="M0 .5h15M5 3.500h10M0 6.500h15M5 9.500h10M0 12.500h15" /></ToolButton>
                <ToolButton aria-label="По ширине"><AlignIcon d="M0 .5h15M0 3.500h15M0 6.500h15M0 9.500h15M0 12.500h15" /></ToolButton>
                <ToolButton aria-label="Абзац"><PilcrowIcon /></ToolButton>
              </Row>
            </GroupRows>
          </GroupBody>
          <GroupName>Абзац</GroupName>
        </Group>
        <Group $w={226}>
          <GroupBody $left={4}>
            <BigButton $w={80}><PictureIcon />Изображение<Arrow /></BigButton>
            <BigButton $w={46}><PaintIcon /><span>Рисунок<br />Paint</span></BigButton>
            <BigButton $w={44}><DateIcon /><span>Дата и<br />время</span></BigButton>
            <BigButton $w={44}><ObjectIcon />Объект</BigButton>
          </GroupBody>
          <GroupName>Вставка</GroupName>
        </Group>
        <Group $w={107}>
          <GroupBody $left={5}>
            <SmallStack>
              <SmallButton><FindIcon />Поиск</SmallButton>
              <SmallButton><ReplaceIcon />Замена</SmallButton>
              <SmallButton><SelectAllIcon />Выделить все</SmallButton>
            </SmallStack>
          </GroupBody>
          <GroupName>Правка</GroupName>
        </Group>
      </Ribbon>

      <Notice role="status">
        <span>Программа WordPad поддерживает не все функции формата этого документа. Часть контента может быть потеряна или отображена неправильно.</span>
        <button aria-label="Закрыть сообщение"><svg width="10" height="9"><path d="M1 .5l8 8M9 .5l-8 8" stroke="#777" strokeWidth="2.200" /></svg></button>
      </Notice>

      <Workspace>
        <RulerRow><Ruler /></RulerRow>
        <Body>
          <Canvas>
            <Page>
              <Heading>Самостоятельная работа</Heading>
              <TaskList>
                <Task $sans><span>1.найти градусную меру угла <i>ABC <Light>(записать номер рисунка и ответ).</Light></i></span></Task>
              </TaskList>
              {rows.map((r, i) => <FigureRow key={i}>{r.map((f, j) => <FigureView key={j} f={f} />)}</FigureRow>)}
              <LooseCaption>Рис.7</LooseCaption>
              <Problem>
                <Light>2. </Light>Точки <i>A, B, C</i> лежат на окружности с центром <i>O</i>,{" "}
                <Symbol width="14" height="13" viewBox="0 0 14 13"><path d="M12 0L1 11.500h12" fill="none" stroke="#111" strokeWidth="1.200" /></Symbol>
                <i>AOB</i> = 80°, <Arc /><i>AC</i> : <Arc /><br />
                <i>BC</i> =<br />= 2 : 3. Найдите углы треугольника <i>ABC</i>
              </Problem>
              <FigureView f={triangle} />
              <LastProblem>
                <TaskList>
                  <Task><span>3.Хорды <i>AB</i> и <i>CD</i> пересекаются в точке <i>K</i>, причем хорда <i>AB</i> делится<br />точкой <i>K</i> на отрезки, равные 10 см и 6 см. На какие отрезки точка <i>K</i><br />делит хорду <i>CD</i>, если</span></Task>
                </TaskList>
                <LastLine><i>CD</i> &gt; <i>AB</i> на 3 см?</LastLine>
              </LastProblem>
              <Scribble width="794" height="560" fill="none" stroke="#83d5fb" strokeWidth="11" strokeLinecap="round" strokeLinejoin="round"><path d={smooth(strokePoints)} /></Scribble>
            </Page>
          </Canvas>
          <Scrollbar>
            <ScrollButton aria-label="Вверх"><Chevron d="M1 5l4-4 4 4" c="#505050" /></ScrollButton>
            <ScrollTrack><ScrollThumb /></ScrollTrack>
            <ScrollButton aria-label="Вниз"><Chevron d="M1 1l4 4 4-4" c="#505050" /></ScrollButton>
          </Scrollbar>
        </Body>
      </Workspace>

      <StatusBar>
        <StatusCell $w={31} />
        <StatusCell $w={51}>100%</StatusCell>
        <ZoomButton aria-label="Уменьшить"><svg width="17" height="17"><circle cx="8.500" cy="8.500" r="7.500" fill="#fafafa" stroke="#777" /><path d="M5 8.500h7" stroke="#444" strokeWidth="2" /></svg></ZoomButton>
        <ZoomSlider type="range" aria-label="Масштаб" defaultValue={50} />
        <ZoomButton aria-label="Увеличить"><svg width="17" height="17"><circle cx="8.500" cy="8.500" r="7.500" fill="#fafafa" stroke="#777" /><path d="M4.500 8.500h8M8.500 4.500v8" stroke="#444" strokeWidth="2" /></svg></ZoomButton>
      </StatusBar>

      <Taskbar>
        <StartButton aria-label="Пуск">
          <svg width="16" height="16" viewBox="0 0 16 16" fill="#fff"><path d="M0 2.200L7 1.200V7.600H0zM8 1.100L16 0V7.600H8zM0 8.400H7V14.800L0 13.800zM8 8.400H16V16L8 14.900z" /></svg>
        </StartButton>
        <SearchBox>
          <svg width="17" height="17" viewBox="0 0 17 17" fill="none" stroke="#e4e4e4" strokeWidth="1.300"><circle cx="10.500" cy="6.500" r="5.500" /><path d="M6.500 10.500L.5 16.500" /></svg>
          <SearchInput aria-label="Поиск" placeholder="Введите здесь текст для поиска" />
        </SearchBox>
        <Apps>
          {apps.map((a) => <AppButton key={a.name} $state={a.state} aria-label={a.name}>{a.icon}</AppButton>)}
        </Apps>
        <Tray>
          <TrayButton $w={24} aria-label="Скрытые значки"><svg width="12" height="7"><path d="M.5 6.500l5.500-6 5.500 6" fill="none" stroke="#fff" strokeWidth="1.300" /></svg></TrayButton>
          <TrayButton $w={24} aria-label="Сеть"><svg width="16" height="14" fill="none" stroke="#fff"><path d="M5 2.500h10.500v7h-12V6M.5 1.500h4v4h-4zM2.500 5.500v3M9.500 9.500v3M6 12.500h7" /></svg></TrayButton>
          <TrayButton $w={24} aria-label="Громкость"><svg width="17" height="14" fill="none" stroke="#fff"><path d="M.5 4.500h3l3.500-3.500v12L3.500 9.500h-3z" /><path d="M9 5q2 2 0 4" /><path d="M11 3q4 4 0 8M13.500 1q5 6 0 12" stroke="#777" /></svg></TrayButton>
          <TrayButton $w={34} aria-label="Windows Ink"><svg width="17" height="16" fill="none" stroke="#fff"><path d="M3.500 12.500L11 2q2-2 3 0L6.500 12.500 3.500 15zM4 9q-4 1-3 5M11 7q4-2 4 0t-4 2" /></svg></TrayButton>
          <TrayButton $w={36}>РУС</TrayButton>
          <TrayButton $w={66}><span>9:26<br />08.05.2020</span></TrayButton>
          <TrayButton $w={48} aria-label="Уведомления"><svg width="17" height="16" fill="none" stroke="#fff"><path d="M.5 1.500h16v11H11l-2.500 3-2.500-3H.5z" /></svg></TrayButton>
          <ShowDesktop />
        </Tray>
      </Taskbar>
    </Window>
  );
}
